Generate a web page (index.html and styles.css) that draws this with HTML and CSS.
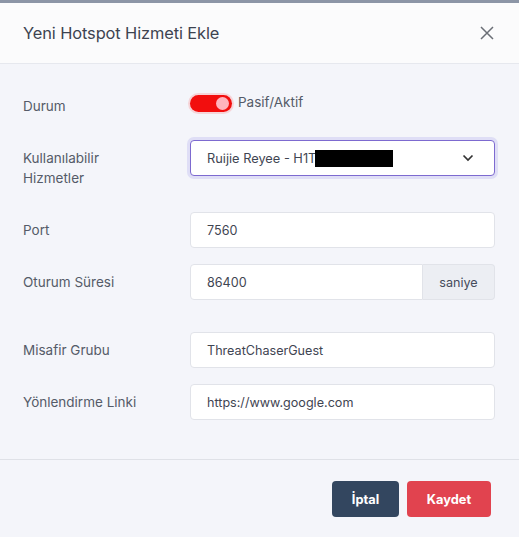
FILE: index.html
```html
<!DOCTYPE html>
<html>
<head>
<meta charset="utf-8">
<link rel="stylesheet" href="styles.css">
</head>
<body>
<div class="modal">
  <div class="topbar"></div>
  <div class="header">
    <h1 class="title">Yeni Hotspot Hizmeti Ekle</h1>
    <svg class="close" width="16" height="16" viewBox="0 0 16 16"><path d="M2 2L14 14M14 2L2 14" stroke="#6b6f76" stroke-width="1.5" fill="none"/></svg>
  </div>
  <div class="body">
    <div class="row row-toggle">
      <div class="label">Durum</div>
      <div class="field toggle-field">
        <span class="toggle"><span class="knob"></span></span>
        <span class="toggle-text">Pasif/Aktif</span>
      </div>
    </div>
    <div class="row row-select">
      <div class="label">Kullanılabilir<br>Hizmetler</div>
      <div class="field">
        <div class="select">
          <span class="sel-text">Ruijie Reyee - H1T<span class="redact"></span></span>
          <svg class="chev" width="12" height="8" viewBox="0 0 12 8"><path d="M1.5 1.5L6 6L10.5 1.5" stroke="#333" stroke-width="1.7" fill="none"/></svg>
        </div>
      </div>
    </div>
    <div class="row">
      <div class="label">Port</div>
      <div class="field"><div class="input">7560</div></div>
    </div>
    <div class="row">
      <div class="label">Oturum Süresi</div>
      <div class="field">
        <div class="group">
          <div class="input grow">86400</div>
          <div class="addon">saniye</div>
        </div>
      </div>
    </div>
    <div class="row row-gap">
      <div class="label">Misafir Grubu</div>
      <div class="field"><div class="input">ThreatChaserGuest</div></div>
    </div>
    <div class="row">
      <div class="label">Yönlendirme Linki</div>
      <div class="field"><div class="input">https://www.google.com</div></div>
    </div>
  </div>
  <div class="footer">
    <button class="btn btn-dark">İptal</button>
    <button class="btn btn-red">Kaydet</button>
  </div>
</div>
</body>
</html>
```
FILE: styles.css
```css
* { box-sizing: border-box; }
html, body { margin: 0; padding: 0; }
body {
  width: 519px;
  height: 537px;
  overflow: hidden;
  background: #f4f5fa;
  font-family: Inter, "Noto Sans", sans-serif;
  color: #454c5b;
}
.modal { display: flex; flex-direction: column; height: 537px; }
.topbar { height: 3px; background: #8c95a6; }
.header {
  height: 61px;
  background: #fbfbfc;
  border-bottom: 1px solid #e6e8ee;
  display: flex;
  align-items: center;
  justify-content: space-between;
  padding: 0 24px 0 23px;
}
.title {
  margin: 0;
  font-size: 16.4px;
  font-weight: 400;
  color: #3d4350;
  letter-spacing: -0.1px;
}
.body {
  padding: 29px 24px 0 23px;
  flex: 1;
  border-bottom: 1px solid #dfe1e7;
}
.row {
  display: flex;
  align-items: center;
  margin-bottom: 16px;
}
.label {
  width: 167px;
  font-size: 13.5px;
  line-height: 20px;
  color: #555b68;
}
.field { flex: 1; }
.row-toggle { height: 27px; margin-bottom: 20px; align-items: flex-start; }
.row-toggle .label { padding-top: 3px; }
.toggle-field { display: flex; align-items: flex-start; }
.toggle {
  width: 42px;
  height: 17px;
  border-radius: 9px;
  background: #f20e0e;
  position: relative;
  margin-top: 2px;
  box-shadow: 0 0 0 2px rgba(255, 80, 80, 0.2);
}
.knob {
  position: absolute;
  right: 3px;
  top: 2px;
  width: 13px;
  height: 13px;
  border-radius: 50%;
  background: #ffb3bd;
}
.toggle-text {
  margin-left: 6px;
  font-size: 13.5px;
  line-height: 18px;
  color: #555b68;
}
.row-select { align-items: flex-start; margin-bottom: 24px; }
.row-select .label { padding-top: 8px; }
.select {
  height: 36px;
  background: #fff;
  border: 1px solid #7d6ad0;
  border-radius: 4px;
  box-shadow: 0 0 0 3px rgba(130, 120, 230, 0.18);
  display: flex;
  align-items: center;
  justify-content: space-between;
  padding: 0 20px 0 16px;
  font-size: 12.8px;
  color: #3f4552;
}
.sel-text { display: flex; align-items: center; }
.redact { display: inline-block; width: 78px; height: 17px; background: #000; margin-left: -1px; }
.input {
  height: 36px;
  background: #fff;
  border: 1px solid #e1e3e9;
  border-radius: 4px;
  display: flex;
  align-items: center;
  padding: 0 16px;
  font-size: 12.6px;
  color: #3f4552;
}
.group { display: flex; }
.group .grow { flex: 1; border-radius: 4px 0 0 4px; }
.addon {
  width: 72px;
  height: 36px;
  background: #eceef3;
  border: 1px solid #e1e3e9;
  border-left: none;
  border-radius: 0 4px 4px 0;
  display: flex;
  align-items: center;
  justify-content: center;
  font-size: 12.6px;
  color: #454c5b;
}
.row-gap { margin-top: 32px; }
.footer {
  height: 77px;
  display: flex;
  justify-content: flex-end;
  align-items: flex-start;
  padding: 21px 28px 0 0;
  gap: 8px;
}
.btn {
  height: 36px;
  border: none;
  border-radius: 4px;
  font-family: Inter, "Noto Sans", sans-serif;
  font-weight: 700;
  font-size: 12.8px;
  color: #fff;
  padding: 0;
}
.btn-dark { width: 67px; background: #33465f; }
.btn-red { width: 84px; background: #e1434f; }
```
